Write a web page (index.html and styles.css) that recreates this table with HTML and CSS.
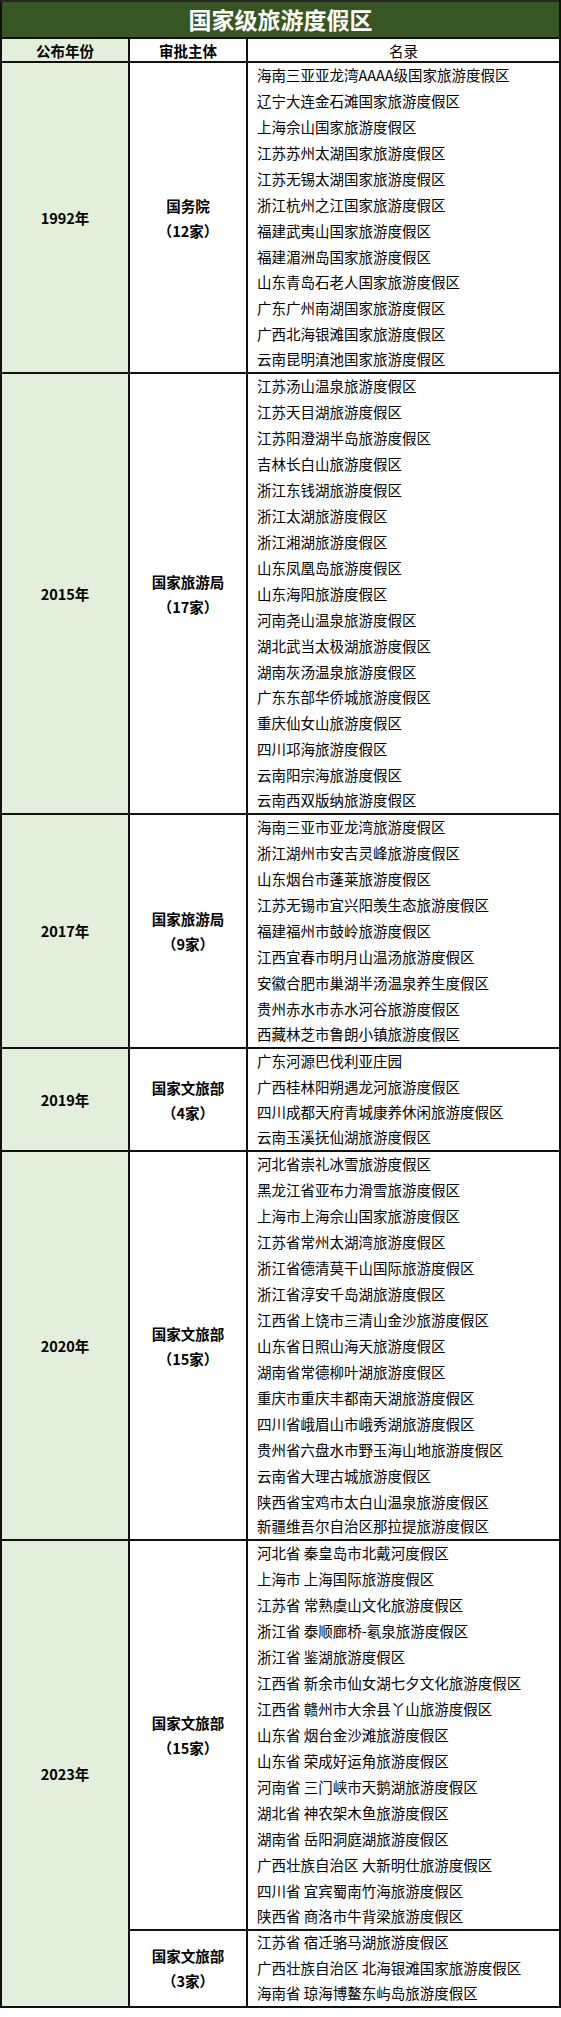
FILE: index.html
```html
<!DOCTYPE html>
<html lang="zh-CN">
<head>
<meta charset="utf-8">
<title>国家级旅游度假区</title>
<link rel="stylesheet" href="styles.css">
</head>
<body>
<table class="tbl">
<colgroup><col class="c1"><col class="c2"><col class="c3"></colgroup>
<thead>
<tr class="title-row"><th colspan="3" class="title">国家级旅游度假区</th></tr>
<tr class="head-row"><th class="h-year">公布年份</th><th class="h-auth">审批主体</th><th class="h-name">名录</th></tr>
</thead>
<tbody>
<tr class="first"><td class="year" rowspan="12">1992年</td><td class="auth" rowspan="12"><div>国务院</div><div>（12家）</div></td><td class="name">海南三亚亚龙湾AAAA级国家旅游度假区</td></tr>
<tr><td class="name">辽宁大连金石滩国家旅游度假区</td></tr>
<tr><td class="name">上海佘山国家旅游度假区</td></tr>
<tr><td class="name">江苏苏州太湖国家旅游度假区</td></tr>
<tr><td class="name">江苏无锡太湖国家旅游度假区</td></tr>
<tr><td class="name">浙江杭州之江国家旅游度假区</td></tr>
<tr><td class="name">福建武夷山国家旅游度假区</td></tr>
<tr><td class="name">福建湄洲岛国家旅游度假区</td></tr>
<tr><td class="name">山东青岛石老人国家旅游度假区</td></tr>
<tr><td class="name">广东广州南湖国家旅游度假区</td></tr>
<tr><td class="name">广西北海银滩国家旅游度假区</td></tr>
<tr><td class="name">云南昆明滇池国家旅游度假区</td></tr>

<tr class="first"><td class="year" rowspan="17">2015年</td><td class="auth" rowspan="17"><div>国家旅游局</div><div>（17家）</div></td><td class="name">江苏汤山温泉旅游度假区</td></tr>
<tr><td class="name">江苏天目湖旅游度假区</td></tr>
<tr><td class="name">江苏阳澄湖半岛旅游度假区</td></tr>
<tr><td class="name">吉林长白山旅游度假区</td></tr>
<tr><td class="name">浙江东钱湖旅游度假区</td></tr>
<tr><td class="name">浙江太湖旅游度假区</td></tr>
<tr><td class="name">浙江湘湖旅游度假区</td></tr>
<tr><td class="name">山东凤凰岛旅游度假区</td></tr>
<tr><td class="name">山东海阳旅游度假区</td></tr>
<tr><td class="name">河南尧山温泉旅游度假区</td></tr>
<tr><td class="name">湖北武当太极湖旅游度假区</td></tr>
<tr><td class="name">湖南灰汤温泉旅游度假区</td></tr>
<tr><td class="name">广东东部华侨城旅游度假区</td></tr>
<tr><td class="name">重庆仙女山旅游度假区</td></tr>
<tr><td class="name">四川邛海旅游度假区</td></tr>
<tr><td class="name">云南阳宗海旅游度假区</td></tr>
<tr><td class="name">云南西双版纳旅游度假区</td></tr>

<tr class="first"><td class="year" rowspan="9">2017年</td><td class="auth" rowspan="9"><div>国家旅游局</div><div>（9家）</div></td><td class="name">海南三亚市亚龙湾旅游度假区</td></tr>
<tr><td class="name">浙江湖州市安吉灵峰旅游度假区</td></tr>
<tr><td class="name">山东烟台市蓬莱旅游度假区</td></tr>
<tr><td class="name">江苏无锡市宜兴阳羡生态旅游度假区</td></tr>
<tr><td class="name">福建福州市鼓岭旅游度假区</td></tr>
<tr><td class="name">江西宜春市明月山温汤旅游度假区</td></tr>
<tr><td class="name">安徽合肥市巢湖半汤温泉养生度假区</td></tr>
<tr><td class="name">贵州赤水市赤水河谷旅游度假区</td></tr>
<tr><td class="name">西藏林芝市鲁朗小镇旅游度假区</td></tr>

<tr class="first"><td class="year" rowspan="4">2019年</td><td class="auth" rowspan="4"><div>国家文旅部</div><div>（4家）</div></td><td class="name">广东河源巴伐利亚庄园</td></tr>
<tr><td class="name">广西桂林阳朔遇龙河旅游度假区</td></tr>
<tr><td class="name">四川成都天府青城康养休闲旅游度假区</td></tr>
<tr><td class="name">云南玉溪抚仙湖旅游度假区</td></tr>

<tr class="first"><td class="year" rowspan="15">2020年</td><td class="auth" rowspan="15"><div>国家文旅部</div><div>（15家）</div></td><td class="name">河北省崇礼冰雪旅游度假区</td></tr>
<tr><td class="name">黑龙江省亚布力滑雪旅游度假区</td></tr>
<tr><td class="name">上海市上海佘山国家旅游度假区</td></tr>
<tr><td class="name">江苏省常州太湖湾旅游度假区</td></tr>
<tr><td class="name">浙江省德清莫干山国际旅游度假区</td></tr>
<tr><td class="name">浙江省淳安千岛湖旅游度假区</td></tr>
<tr><td class="name">江西省上饶市三清山金沙旅游度假区</td></tr>
<tr><td class="name">山东省日照山海天旅游度假区</td></tr>
<tr><td class="name">湖南省常德柳叶湖旅游度假区</td></tr>
<tr><td class="name">重庆市重庆丰都南天湖旅游度假区</td></tr>
<tr><td class="name">四川省峨眉山市峨秀湖旅游度假区</td></tr>
<tr><td class="name">贵州省六盘水市野玉海山地旅游度假区</td></tr>
<tr><td class="name">云南省大理古城旅游度假区</td></tr>
<tr><td class="name">陕西省宝鸡市太白山温泉旅游度假区</td></tr>
<tr><td class="name">新疆维吾尔自治区那拉提旅游度假区</td></tr>

<tr class="first"><td class="year" rowspan="18">2023年</td><td class="auth" rowspan="15"><div>国家文旅部</div><div>（15家）</div></td><td class="name">河北省 秦皇岛市北戴河度假区</td></tr>
<tr><td class="name">上海市 上海国际旅游度假区</td></tr>
<tr><td class="name">江苏省 常熟虞山文化旅游度假区</td></tr>
<tr><td class="name">浙江省 泰顺廊桥-氡泉旅游度假区</td></tr>
<tr><td class="name">浙江省 鉴湖旅游度假区</td></tr>
<tr><td class="name">江西省 新余市仙女湖七夕文化旅游度假区</td></tr>
<tr><td class="name">江西省 赣州市大余县丫山旅游度假区</td></tr>
<tr><td class="name">山东省 烟台金沙滩旅游度假区</td></tr>
<tr><td class="name">山东省 荣成好运角旅游度假区</td></tr>
<tr><td class="name">河南省 三门峡市天鹅湖旅游度假区</td></tr>
<tr><td class="name">湖北省 神农架木鱼旅游度假区</td></tr>
<tr><td class="name">湖南省 岳阳洞庭湖旅游度假区</td></tr>
<tr><td class="name">广西壮族自治区 大新明仕旅游度假区</td></tr>
<tr><td class="name">四川省 宜宾蜀南竹海旅游度假区</td></tr>
<tr><td class="name">陕西省 商洛市牛背梁旅游度假区</td></tr>
<tr class="sub"><td class="auth" rowspan="3"><div>国家文旅部</div><div>（3家）</div></td><td class="name">江苏省 宿迁骆马湖旅游度假区</td></tr>
<tr><td class="name">广西壮族自治区 北海银滩国家旅游度假区</td></tr>
<tr><td class="name">海南省 琼海博鳌东屿岛旅游度假区</td></tr>
</tbody>
</table>
</body>
</html>
```

FILE: styles.css
```css
html, body {
  margin: 0;
  padding: 0;
  background: #ffffff;
}

body {
  font-family: "Noto Sans CJK SC", "Noto Sans", sans-serif;
  color: #000000;
}

.tbl {
  border-collapse: collapse;
  table-layout: fixed;
  width: 559px;
  border: 2px solid #111111;
}

.c1 { width: 128px; }
.c2 { width: 118px; }
.c3 { width: 313px; }

th, td {
  padding: 0;
  border-left: 2px solid #111111;
  border-right: 2px solid #111111;
}

.title-row th {
  height: 35px;
  background: #375623;
  color: #ffffff;
  font-size: 23px;
  font-weight: 700;
  line-height: 35px;
  text-align: center;
  border-bottom: 2px solid #111111;
  border-top: 2px solid #262626;
}

.head-row th {
  height: 22px;
  font-size: 14.5px;
  line-height: 20px;
  text-align: center;
  vertical-align: bottom;
  border-bottom: 2px solid #111111;
}

.h-year {
  background: #e2efda;
  font-weight: 700;
}

.h-auth {
  background: #ffffff;
  font-weight: 700;
}

.h-name {
  background: #ffffff;
  font-weight: 400;
}

tr.first td,
tr.sub td {
  border-top: 2px solid #111111;
}

.year {
  background: #e2efda;
  font-size: 14.5px;
  font-weight: 700;
  text-align: center;
  vertical-align: middle;
}

.auth {
  background: #ffffff;
  font-size: 14.5px;
  font-weight: 700;
  text-align: center;
  vertical-align: middle;
  line-height: 25px;
}

.name {
  height: 25.95px;
  box-sizing: border-box;
  font-size: 14.5px;
  line-height: 20px;
  padding: 0 0 3px 9px;
  vertical-align: bottom;
  white-space: nowrap;
}
```
